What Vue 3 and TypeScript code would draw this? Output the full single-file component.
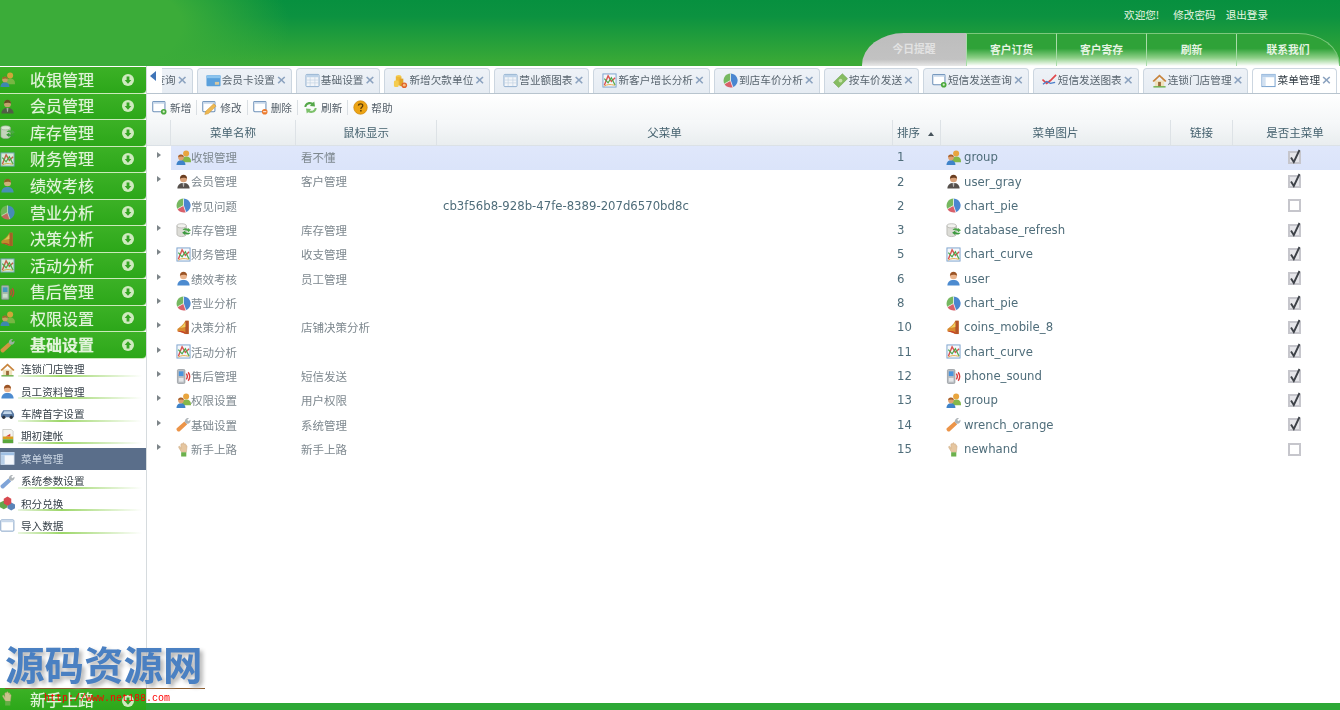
<script setup lang="ts">
interface TabItem { name: string; icon: string; active?: boolean }
interface SideItem { name: string; icon: string; active?: boolean }
interface MenuRow {
  name: string
  tip: string
  parent: string
  sort: number
  icon: string
  iconName: string
  main: boolean
  tree: boolean
}

const links = ['欢迎您!', '修改密码', '退出登录']
const navs = ['今日提醒', '客户订货', '客户寄存', '刷新', '联系我们']

const groups: { name: string; icon: string; up?: boolean }[] = [
  { name: '收银管理', icon: 'i-group' },
  { name: '会员管理', icon: 'i-user-gray' },
  { name: '库存管理', icon: 'i-database' },
  { name: '财务管理', icon: 'i-curve' },
  { name: '绩效考核', icon: 'i-user' },
  { name: '营业分析', icon: 'i-pie' },
  { name: '决策分析', icon: 'i-coins-mobile' },
  { name: '活动分析', icon: 'i-curve' },
  { name: '售后管理', icon: 'i-phone' },
  { name: '权限设置', icon: 'i-group', up: true },
  { name: '基础设置', icon: 'i-wrench', up: true }
]

const subs: SideItem[] = [
  { name: '连锁门店管理', icon: 'i-house' },
  { name: '员工资料管理', icon: 'i-user' },
  { name: '车牌首字设置', icon: 'i-car' },
  { name: '期初建帐', icon: 'i-book' },
  { name: '菜单管理', icon: 'i-menu', active: true },
  { name: '系统参数设置', icon: 'i-wrench-blue' },
  { name: '积分兑换', icon: 'i-cubes' },
  { name: '导入数据', icon: 'i-window' }
]

const tabs: TabItem[] = [
  { name: '短信查询', icon: 'i-window-add' },
  { name: '会员卡设置', icon: 'i-card' },
  { name: '基础设置', icon: 'i-table' },
  { name: '新增欠款单位', icon: 'i-coins' },
  { name: '营业额图表', icon: 'i-table' },
  { name: '新客户增长分析', icon: 'i-curve' },
  { name: '到店车价分析', icon: 'i-pie' },
  { name: '按车价发送', icon: 'i-money' },
  { name: '短信发送查询', icon: 'i-window-add' },
  { name: '短信发送图表', icon: 'i-line' },
  { name: '连锁门店管理', icon: 'i-house' },
  { name: '菜单管理', icon: 'i-menu-tab', active: true }
]

const tools = [
  { name: '新增', icon: 'i-window-add' },
  { name: '修改', icon: 'i-window-edit' },
  { name: '删除', icon: 'i-window-del' },
  { name: '刷新', icon: 'i-refresh' },
  { name: '帮助', icon: 'i-help' }
]

const rows: MenuRow[] = [
  { name: '收银管理', tip: '看不懂', parent: '', sort: 1, icon: 'i-group', iconName: 'group', main: true, tree: true },
  { name: '会员管理', tip: '客户管理', parent: '', sort: 2, icon: 'i-user-gray', iconName: 'user_gray', main: true, tree: true },
  { name: '常见问题', tip: '', parent: 'cb3f56b8-928b-47fe-8389-207d6570bd8c', sort: 2, icon: 'i-pie', iconName: 'chart_pie', main: false, tree: false },
  { name: '库存管理', tip: '库存管理', parent: '', sort: 3, icon: 'i-database', iconName: 'database_refresh', main: true, tree: true },
  { name: '财务管理', tip: '收支管理', parent: '', sort: 5, icon: 'i-curve', iconName: 'chart_curve', main: true, tree: true },
  { name: '绩效考核', tip: '员工管理', parent: '', sort: 6, icon: 'i-user', iconName: 'user', main: true, tree: true },
  { name: '营业分析', tip: '', parent: '', sort: 8, icon: 'i-pie', iconName: 'chart_pie', main: true, tree: true },
  { name: '决策分析', tip: '店铺决策分析', parent: '', sort: 10, icon: 'i-coins-mobile', iconName: 'coins_mobile_8', main: true, tree: true },
  { name: '活动分析', tip: '', parent: '', sort: 11, icon: 'i-curve', iconName: 'chart_curve', main: true, tree: true },
  { name: '售后管理', tip: '短信发送', parent: '', sort: 12, icon: 'i-phone', iconName: 'phone_sound', main: true, tree: true },
  { name: '权限设置', tip: '用户权限', parent: '', sort: 13, icon: 'i-group', iconName: 'group', main: true, tree: true },
  { name: '基础设置', tip: '系统管理', parent: '', sort: 14, icon: 'i-wrench', iconName: 'wrench_orange', main: true, tree: true },
  { name: '新手上路', tip: '新手上路', parent: '', sort: 15, icon: 'i-hand', iconName: 'newhand', main: false, tree: true }
]
</script>

<template>
  <svg class="defs" aria-hidden="true">
    <symbol id="i-group" viewBox="0 0 16 16">
      <path d="M6 12c0-3 2-5 5-5s5 2 5 5v1H6z" fill="#84b84a" />
      <circle cx="10.8" cy="3.8" r="3.2" fill="#e9a53e" />
      <path d="M.5 16c0-3.6 2-5.2 4.8-5.2s4.800 1.600 4.800 5.200z" fill="#3f83c9" />
      <circle cx="5.300" cy="8" r="3" fill="#e0a070" />
      <path d="M2.300 7.800c0-2.300 1.400-3 3-3s3 .8 3 2.800c-1.500-.8-4-.9-6 .2z" fill="#a8622c" />
    </symbol>
    <symbol id="i-user-gray" viewBox="0 0 16 16">
      <path d="M1.500 15.500c0-4 2.500-6 6.500-6s6.500 2 6.500 6z" fill="#56504c" />
      <circle cx="8" cy="5" r="3.800" fill="#d9a27a" />
      <path d="M4.200 5c0-3 1.700-4.300 3.800-4.300S11.800 2 11.800 5c-1.800-1.300-5.600-1.300-7.600 0z" fill="#6a3f22" />
      <path d="M7 9.500h2l-.5 4h-1z" fill="#b8b8b8" />
    </symbol>
    <symbol id="i-user" viewBox="0 0 16 16">
      <path d="M1.500 15.500c0-4 2.500-6 6.500-6s6.500 2 6.500 6z" fill="#4c8bd0" />
      <circle cx="8" cy="5" r="3.800" fill="#eab48c" />
      <path d="M4.200 5c0-3 1.700-4.300 3.800-4.300S11.800 2 11.800 5c-1.800-1.300-5.600-1.300-7.600 0z" fill="#9a5426" />
    </symbol>
    <symbol id="i-pie" viewBox="0 0 16 16">
      <path d="M8 8V.5a7.500 7.500 0 0 1 2.500 14.600z" fill="#4a86d0" />
      <path d="M8 8 10.500 15.100A7.500 7.500 0 0 1 1.500 11.600z" fill="#d8606a" />
      <path d="M8 8 1.500 11.600A7.500 7.500 0 0 1 8 .5z" fill="#76b860" />
      <path d="M8 .5V8l2.500 7.100M8 8 1.500 11.600" fill="none" stroke="#fff" stroke-width=".7" />
    </symbol>
    <symbol id="i-database" viewBox="0 0 16 16">
      <path d="M1 3v9c0 1.500 2.500 2.500 5 2.500s5-1 5-2.500V3z" fill="#dcdcd6" stroke="#a8a8a4" stroke-width=".7" />
      <ellipse cx="6" cy="3" rx="5" ry="2.200" fill="#f2f2ee" stroke="#a8a8a4" stroke-width=".7" />
      <path d="M7 7.500c1-2 4-2.500 5.500-1V5L16 7.800 12.500 10V8.500C11 7.500 9 7.800 7 7.500z" fill="#4ea84a" />
      <path d="M15.500 10.500c-1 2-4 2.500-5.500 1V13L6.500 10.500 10 8v1.500c1.500 1 3.500.8 5.500 1z" fill="#3c9a3e" />
    </symbol>
    <symbol id="i-curve" viewBox="0 0 16 16">
      <rect x="1" y="1" width="14" height="14" fill="#f4f7fb" stroke="#7ba2cc" stroke-width="1" />
      <path d="M2.500 13 6.500 3l3.500 6 4-4" fill="none" stroke="#d9534f" stroke-width="1.500" />
      <path d="M2.500 6l4 4.500L10 5l4 8" fill="none" stroke="#4ea84a" stroke-width="1.300" />
      <path d="M2.500 14c3-2 6-2 11-1" fill="none" stroke="#e9a53e" stroke-width="1" />
    </symbol>
    <symbol id="i-coins-mobile" viewBox="0 0 16 16">
      <path d="M10 .8h3.500V15H10C7 13.500 4 12.500 1.500 12V9.500C4 8 8 5 10 .8z" fill="#d88a2e" />
      <path d="M10 .8h3.500V15H10z" fill="#b5542a" />
      <path d="M1.500 12c3-.5 6-.5 8.500 1v2C7 13.500 4 12.500 1.500 12z" fill="#c8452c" />
      <path d="M4 8.500c2-1 4-3 6-6v5z" fill="#f0d060" />
    </symbol>
    <symbol id="i-phone" viewBox="0 0 16 16">
      <rect x="1.500" y=".5" width="8" height="15" rx="1.200" fill="#b8bcc0" stroke="#8a8e92" stroke-width=".7" />
      <rect x="3" y="2.500" width="5" height="5" fill="#4a94dc" />
      <rect x="3" y="9.500" width="5" height="4" fill="#e4e6e8" />
      <path d="M11 5c1.300 1.800 1.300 4.200 0 6M13 3.500c2 2.800 2 6.200 0 9" fill="none" stroke="#d83a3a" stroke-width="1.500" />
    </symbol>
    <symbol id="i-wrench" viewBox="0 0 16 16">
      <path d="M.8 12 9 4.800l3 3L4 15.200c-1.800 1.200-4.400-1.400-3.200-3.200z" fill="#ec9448" />
      <path d="M9.500 5.500c-.5-2.500 1.500-5 4.500-4.500L12 3l1 1.500L15.500 3c.5 3-2 5-4.500 4z" fill="#aeb4b8" />
    </symbol>
    <symbol id="i-wrench-blue" viewBox="0 0 16 16">
      <path d="M.8 12 9 4.800l3 3L4 15.200c-1.800 1.200-4.400-1.400-3.200-3.200z" fill="#7fa4d8" />
      <path d="M9.500 5.500c-.5-2.500 1.500-5 4.500-4.500L12 3l1 1.500L15.500 3c.5 3-2 5-4.500 4z" fill="#aeb4b8" />
    </symbol>
    <symbol id="i-hand" viewBox="0 0 16 16">
      <path d="M3 6c-.5-1.500.5-2 1.200-1l1 2V2.500c0-1 1.300-1 1.500 0L7 1.500c.2-1 1.500-1 1.600 0l.3 1c.3-.9 1.500-.8 1.500.2v1.500c.5-.8 1.600-.5 1.400.5L11 11H6z" fill="#e6c6a0" stroke="#c8a47c" stroke-width=".5" />
      <rect x="5.500" y="11" width="5.500" height="4.500" fill="#6cb04c" />
    </symbol>
    <symbol id="i-house" viewBox="0 0 16 16">
      <path d="M3 8h10v6.500H3z" fill="#f0e2bc" />
      <path d="M.5 8.500 8 1.500l7.500 7-1.500 1L8 4 2 9.500z" fill="#c8843c" />
      <rect x="6.500" y="9.500" width="3" height="5" fill="#9a6a3a" />
      <rect x="1.500" y="14" width="13" height="1.500" fill="#6cb04c" />
    </symbol>
    <symbol id="i-car" viewBox="0 0 16 16">
      <path d="M1 8.500 3.500 4.500h9L15 8.500v3.500H1z" fill="#5c7ca4" />
      <path d="M4.500 5.500h7l1.500 3H3z" fill="#c2d6ea" />
      <circle cx="4" cy="12" r="1.800" fill="#2c3440" />
      <circle cx="12" cy="12" r="1.800" fill="#2c3440" />
    </symbol>
    <symbol id="i-book" viewBox="0 0 16 16">
      <path d="M3 .5h9l2 2V15H3z" fill="#f4f4f0" stroke="#b0b0ac" stroke-width=".6" />
      <rect x="3" y="8" width="11" height="3" fill="#d8a020" />
      <path d="M3 11h11v4H3z" fill="#5aa83c" />
      <path d="M6 8 11 5v3z" fill="#d84a3a" />
    </symbol>
    <symbol id="i-menu" viewBox="0 0 16 16">
      <rect x="1" y="1.500" width="14" height="13" fill="#f4f7fb" stroke="#cfdcec" stroke-width=".8" />
      <rect x="1" y="1.500" width="14" height="3" fill="#9fc0e4" />
      <rect x="1" y="4.500" width="4" height="10" fill="#b8cfe8" />
    </symbol>
    <symbol id="i-menu-tab" viewBox="0 0 16 16">
      <rect x="1" y="1.500" width="14" height="13" fill="#fff" stroke="#6f9ccc" stroke-width="1" />
      <rect x="1" y="1.500" width="14" height="3" fill="#b6cfea" />
      <rect x="1.500" y="4.500" width="3.500" height="9.500" fill="#d2e1f1" />
    </symbol>
    <symbol id="i-table" viewBox="0 0 16 16">
      <rect x="1" y="1.500" width="14" height="13" rx="1" fill="#f2f5f9" stroke="#8eaecf" stroke-width="1" />
      <rect x="1.500" y="2" width="13" height="2.500" fill="#bcd2e8" />
      <path d="M5.500 4.500v9.500M10.500 4.500v9.500M1.500 7.500h13M1.500 10.500h13" stroke="#c2d2e2" stroke-width=".7" />
    </symbol>
    <symbol id="i-cubes" viewBox="0 0 16 16">
      <path d="M0 7l4-2 4 2v5l-4 2-4-2z" fill="#62a84c" />
      <path d="M8 9l4-2 4 2v4l-4 2.500L8 13z" fill="#5a84b8" />
      <path d="M4 3l4-2.500L12 3v5l-4 2.500L4 8z" fill="#d84a50" />
    </symbol>
    <symbol id="i-window" viewBox="0 0 16 16">
      <rect x=".8" y="2" width="14" height="12" rx="1" fill="#fff" stroke="#7f9fc4" stroke-width="1" />
      <rect x="1.300" y="2.500" width="13" height="2" fill="#c8d8ea" />
    </symbol>
    <symbol id="i-card" viewBox="0 0 16 16">
      <rect x=".5" y="2.500" width="15" height="11.500" rx="1" fill="#5aa0dc" />
      <rect x=".5" y="2.500" width="15" height="3" fill="#8cc4ee" />
      <rect x="9.500" y="9.500" width="4.500" height="3" fill="#d8c8a0" />
    </symbol>
    <symbol id="i-coins" viewBox="0 0 16 16">
      <ellipse cx="6" cy="4" rx="3" ry="2" fill="#f4cc50" />
      <rect x="3" y="4" width="6" height="9" fill="#eeb838" />
      <rect x="1" y="8" width="5" height="7" rx="1.500" fill="#f4cc50" />
      <rect x="7" y="6" width="4" height="8" fill="#e0a428" />
      <circle cx="12" cy="13" r="3" fill="#e0622c" />
      <circle cx="12" cy="13" r="1.500" fill="#f4c080" />
    </symbol>
    <symbol id="i-money" viewBox="0 0 16 16">
      <path d="M.5 10 10 .8 15.500 6 6 15.500z" fill="#86bc62" stroke="#6ca24c" stroke-width=".6" />
      <circle cx="8" cy="8" r="2" fill="#c4e0a8" />
    </symbol>
    <symbol id="i-line" viewBox="0 0 16 16">
      <path d="M.5 7 5 11l4-3 6-6" fill="none" stroke="#e0484c" stroke-width="1.800" />
      <path d="M1 12l4-3 4 2 5-1" fill="none" stroke="#4a7cc8" stroke-width="1.400" />
    </symbol>
    <symbol id="i-window-add" viewBox="0 0 16 16">
      <rect x=".8" y="1.500" width="13" height="11" rx="1" fill="#fff" stroke="#6c90b8" stroke-width="1.100" />
      <rect x="1.300" y="2" width="12" height="2" fill="#c8d8ea" />
      <circle cx="12.500" cy="12.500" r="3" fill="#4aa83c" />
      <circle cx="12.500" cy="12.500" r="1.200" fill="#d8f0c8" />
    </symbol>
    <symbol id="i-window-del" viewBox="0 0 16 16">
      <rect x=".8" y="1.500" width="13" height="11" rx="1" fill="#fff" stroke="#6c90b8" stroke-width="1.100" />
      <rect x="1.300" y="2" width="12" height="2" fill="#c8d8ea" />
      <circle cx="12.500" cy="12.500" r="3" fill="#ec7a2c" />
      <rect x="10.800" y="12" width="3.400" height="1" fill="#fff" />
    </symbol>
    <symbol id="i-window-edit" viewBox="0 0 16 16">
      <rect x=".8" y="1.500" width="13" height="11" rx="1" fill="#fff" stroke="#6c90b8" stroke-width="1.100" />
      <rect x="1.300" y="2" width="12" height="2" fill="#c8d8ea" />
      <path d="M3 15.500 4 12 12.500 4l2.500 2.500L7 14.500z" fill="#eeb850" stroke="#c8902c" stroke-width=".5" />
    </symbol>
    <symbol id="i-refresh" viewBox="0 0 16 16">
      <path d="M1.500 7.500C1.500 3.500 6 .8 10.500 3l1.500-1.500.8 5.500-5.500-.6 1.500-1.500C6.500 3.800 4 5 3.500 7.500z" fill="#55a84a" />
      <path d="M14.500 8.500c0 4-4.500 6.700-9 4.500L4 14.500 3.200 9l5.500.6-1.500 1.500c2.300 1.100 4.800-.100 5.300-2.600z" fill="#7cc06a" />
    </symbol>
    <symbol id="i-help" viewBox="0 0 16 16">
      <circle cx="8" cy="8" r="7.200" fill="#eda414" stroke="#c88408" stroke-width=".7" />
      <path d="M5.800 6c.2-2.600 4.700-2.600 4.600 0 0 1.800-2 1.800-2 3.500" fill="none" stroke="#5a3c08" stroke-width="1.400" />
      <rect x="7.600" y="10.600" width="1.600" height="1.700" fill="#5a3c08" />
    </symbol>
    <symbol id="i-check" viewBox="0 0 13 16">
      <path d="M3 8.500 5.800 13 11.500 1" fill="none" stroke="#3e4248" stroke-width="1.900" />
    </symbol>
  </svg>

  <div class="shot">
    <div class="page">
      <header class="top">
        <div class="top-links">
          <span v-for="link in links" :key="link">{{ link }}</span>
        </div>
        <nav class="top-nav">
          <a v-for="(nav, i) in navs" :key="nav" :class="['nav-tab', `nav-${i}`]">{{ nav }}</a>
        </nav>
      </header>

      <div class="body">
        <aside class="side">
          <div v-for="g in groups" :key="g.name" :class="['acc', { 'acc-open': g.name === '基础设置' }]">
            <svg class="ico acc-ico"><use :href="`#${g.icon}`" /></svg>
            <span class="acc-name">{{ g.name }}</span>
            <svg class="acc-arrow" viewBox="0 0 12 12">
              <circle cx="6" cy="6" r="6" fill="#cfeabf" />
              <path v-if="g.up" d="M6 2.300 9.300 6H7.400v3.500H4.600V6H2.700z" fill="#35a523" />
              <path v-else d="M6 9.700 9.300 6H7.400V2.500H4.600V6H2.700z" fill="#35a523" />
            </svg>
          </div>
          <ul class="subs">
            <li v-for="s in subs" :key="s.name" :class="['sub', { on: s.active }]">
              <svg class="ico"><use :href="`#${s.icon}`" /></svg>
              <span>{{ s.name }}</span>
            </li>
          </ul>
          <div class="acc acc-last">
            <svg class="ico acc-ico"><use href="#i-hand" /></svg>
            <span class="acc-name">新手上路</span>
            <svg class="acc-arrow" viewBox="0 0 12 12">
              <circle cx="6" cy="6" r="6" fill="#cfeabf" />
              <path d="M6 9.700 9.300 6H7.400V2.500H4.600V6H2.700z" fill="#35a523" />
            </svg>
          </div>
        </aside>

        <main class="main">
          <div class="tabs">
            <span class="tabs-prev"><i></i></span>
            <div v-for="t in tabs" :key="t.name + t.icon" :class="['tab', { on: t.active }]">
              <svg class="ico"><use :href="`#${t.icon}`" /></svg>
              <span class="tab-name">{{ t.name }}</span>
              <span class="tab-x">×</span>
            </div>
          </div>

          <div class="tools">
            <template v-for="(tool, i) in tools" :key="tool.name">
              <i v-if="i" class="tool-sep"></i>
              <button class="tool" type="button">
                <svg class="ico"><use :href="`#${tool.icon}`" /></svg>
                <span>{{ tool.name }}</span>
              </button>
            </template>
          </div>

          <div class="grid">
            <div class="row head">
              <div></div>
              <div>菜单名称</div>
              <div>鼠标显示</div>
              <div>父菜单</div>
              <div class="head-sort">排序<i class="sort-up"></i></div>
              <div>菜单图片</div>
              <div>链接</div>
              <div class="head-last">是否主菜单</div>
            </div>
            <div v-for="(r, i) in rows" :key="i" :class="['row', 'line', { sel: i === 0 }]">
              <div class="c-tree"><i v-if="r.tree" class="tree-arrow"></i></div>
              <div class="c-name">
                <svg class="ico"><use :href="`#${r.icon}`" /></svg>
                <span>{{ r.name }}</span>
              </div>
              <div class="c-tip">{{ r.tip }}</div>
              <div class="c-parent">{{ r.parent }}</div>
              <div class="c-sort">{{ r.sort }}</div>
              <div class="c-img">
                <svg class="ico"><use :href="`#${r.icon}`" /></svg>
                <span>{{ r.iconName }}</span>
              </div>
              <div></div>
              <div class="c-main">
                <span :class="['box', { checked: r.main }]">
                  <svg v-if="r.main" class="tick"><use href="#i-check" /></svg>
                </span>
              </div>
            </div>
          </div>

          <div class="foot"></div>
        </main>
      </div>
    </div>

    <div class="mark">
      <div class="mark-title">源码资源网</div>
      <div class="mark-url">http://www.net188.com</div>
    </div>
  </div>
</template>

<style>
html, body {
  margin: 0;
  background: #fff;
  overflow: hidden;
}
</style>

<style scoped>
.defs {
  position: absolute;
  width: 0;
  height: 0;
}

.shot {
  position: relative;
  width: 1340px;
  height: 710px;
  overflow: hidden;
  font-family: "Noto Sans CJK SC", "Liberation Sans", sans-serif;
}

.page {
  height: 710px;
  display: flex;
  flex-direction: column;
  filter: blur(0.45px);
}

.ico {
  width: 15px;
  height: 15px;
  flex: none;
}

/* header */
.top {
  height: 66px;
  flex: none;
  display: flex;
  flex-direction: column;
  background:
    radial-gradient(ellipse 240px 100px at 50px 25px, #3bac39 55%, rgba(59, 172, 57, 0) 100%),
    linear-gradient(#07903f 0, #0c9240 25%, #3aaa36 95%);
}

.top-links {
  height: 33px;
  display: flex;
  justify-content: flex-end;
  gap: 10px;
  padding: 6px 72px 0 0;
  box-sizing: border-box;
  font-size: 10.6px;
  line-height: 18px;
  color: #e8f6e4;
}

.top-links span:first-child {
  margin-right: 4px;
}

.top-nav {
  margin-left: auto;
  width: 478px;
  height: 33px;
  display: flex;
}

.nav-tab {
  width: 90px;
  border-left: 1px solid #a8dca8;
  border-top: 1px solid #7cc87c;
  box-sizing: border-box;
  text-align: center;
  font-size: 10.8px;
  font-weight: 700;
  line-height: 30px;
  color: #e6f4e2;
  background: linear-gradient(#2fa238 0, #2fa238 45%, #8fd088 75%, #fff 100%);
}

.nav-0 {
  width: 104px;
  border: 0;
  border-top-left-radius: 42px 32px;
  background: linear-gradient(#bdbdbd 0, #c2c2c2 80%, #e8e8e8 100%);
  color: #e2e2e2;
  line-height: 31px;
}

.nav-4 {
  width: 104px;
  border-top-right-radius: 42px 32px;
  border-right: 1px solid #7cc87c;
}

/* left column */
.body {
  flex: 1;
  min-height: 0;
  display: flex;
}

.side {
  width: 147px;
  flex: none;
  display: flex;
  flex-direction: column;
  box-sizing: border-box;
  border-right: 1px solid #d6dbde;
  padding-top: 1px;
  overflow: hidden;
}

.acc {
  height: 26.55px;
  flex: none;
  box-sizing: border-box;
  display: flex;
  align-items: center;
  position: relative;
  background: linear-gradient(#3cb126, #2ca719);
  border-bottom: 1.6px solid #cbeabb;
  border-bottom-right-radius: 4px;
}

.acc-ico {
  opacity: 0.85;
}

.acc-name {
  margin-left: 15px;
  font-size: 16px;
  line-height: 22px;
  color: #e2f4da;
  text-shadow: 0 0 1px rgba(255, 255, 255, 0.5);
  margin-bottom: 2px;
}

.acc-open .acc-name {
  font-weight: 700;
}

.acc-arrow {
  position: absolute;
  left: 122px;
  top: 6.500px;
  width: 12px;
  height: 12px;
}

.subs {
  list-style: none;
  margin: -1px 0 0;
  padding: 0;
  flex: 1;
}

.sub {
  height: 22.4px;
  display: flex;
  align-items: center;
  gap: 6px;
  position: relative;
  font-size: 10.6px;
  line-height: 22px;
  color: #38424a;
}

.sub::after {
  content: "";
  position: absolute;
  left: 18px;
  right: 4px;
  top: 17px;
  height: 2px;
  background: linear-gradient(90deg, rgba(140, 205, 90, 0.2), #9cd668 35%, rgba(160, 216, 112, 0));
}

.sub.on {
  background: #5a6e8a;
  color: #c8d4e2;
}

.sub.on::after {
  display: none;
}

.acc-last {
  height: 22px;
  border-bottom: 0;
  align-items: flex-start;
  border-radius: 0;
}

.acc-last .acc-ico {
  margin-top: 3px;
}

.acc-last .acc-arrow {
  top: 7px;
}

/* right column */
.main {
  flex: 1;
  min-width: 0;
  display: flex;
  flex-direction: column;
}

.tabs {
  height: 28px;
  flex: none;
  display: flex;
  justify-content: flex-end;
  align-items: flex-end;
  gap: 4px;
  padding-right: 3px;
  position: relative;
  overflow: hidden;
  background: #fff;
  border-bottom: 1px solid #b8c4ce;
  box-sizing: border-box;
}

.tabs-prev {
  position: absolute;
  left: 0;
  top: 0;
  bottom: 0;
  width: 15px;
  z-index: 1;
  background: #fff;
}

.tabs-prev i {
  position: absolute;
  left: 3px;
  top: 5px;
  border-style: solid;
  border-width: 5.500px 6px 5.500px 0;
  border-color: transparent #3f74b8 transparent transparent;
}

.tab {
  flex: none;
  height: 25px;
  display: flex;
  align-items: center;
  box-sizing: border-box;
  padding: 0 7.900px 2px 8px;
  background: linear-gradient(#eef2f7, #e6ecf3);
  border: 1px solid #ccd6e0;
  border-bottom: 0;
  border-radius: 4px 4px 0 0;
  font-size: 10.67px;
  line-height: 22px;
  color: #59656f;
}

.tab.on {
  background: #fff;
  color: #333e46;
  height: 26px;
  margin-bottom: -1px;
  padding-bottom: 3px;
}

.tab-name {
  margin-left: 1px;
}

.tab-x {
  width: 7px;
  margin-left: 1px;
  font-family: "DejaVu Sans", sans-serif;
  font-size: 13px;
  line-height: 14px;
  font-weight: 700;
  text-align: center;
  color: #8ba2bf;
}

.tools {
  height: 26px;
  flex: none;
  display: flex;
  align-items: center;
  background: linear-gradient(#fff, #f5f7f8);
}

.tool {
  display: flex;
  align-items: center;
  gap: 3px;
  padding: 0 5px;
  border: 0;
  background: none;
  font: inherit;
  font-size: 10.67px;
  color: #55606a;
}

.tool-sep {
  width: 1px;
  height: 15px;
  background: #dadfe3;
}

.row {
  display: grid;
  grid-template-columns: 24px 125px 141px 456px 48px 230px 62px 1fr;
}

.head {
  height: 26px;
  box-sizing: border-box;
  background: linear-gradient(#f7f9fa, #e9edef);
  border-bottom: 1px solid #dbe1e6;
  font-size: 11.5px;
  line-height: 25px;
  color: #46626f;
  text-align: center;
}

.head > div {
  border-right: 1px solid #dde2e6;
}

.head > div.head-last {
  border-right: 0;
  padding-left: 17px;
}

.head-sort {
  text-align: left;
  padding-left: 4px;
  position: relative;
}

.sort-up {
  position: absolute;
  left: 35px;
  top: 12px;
  border-style: solid;
  border-width: 0 3px 4px;
  border-color: transparent transparent #45525a;
}

.line {
  height: 24.33px;
  grid-template-rows: 24.33px;
  font-size: 11.5px;
  line-height: 22px;
  color: #7e888f;
  align-items: center;
}

.line > div:not(.c-tree) {
  box-sizing: border-box;
  padding-bottom: 2px;
}

.sel > div:not(.c-tree) {
  height: 100%;
  display: flex;
  align-items: center;
  background: linear-gradient(#dfe7fb, #dbe4fa);
}

.c-tree {
  position: relative;
  height: 100%;
}

.tree-arrow {
  position: absolute;
  left: 10px;
  top: 6px;
  border-style: solid;
  border-width: 3px 0 3px 4px;
  border-color: transparent transparent transparent #7d8589;
}

.c-name {
  display: flex;
  align-items: center;
  padding-left: 5px;
}

.c-tip {
  padding-left: 5px;
}

.c-parent,
.c-sort,
.c-img {
  font-family: "DejaVu Sans", sans-serif;
  font-size: 11.7px;
  line-height: 24px;
  color: #4f6d7a;
}

.c-parent {
  padding-left: 6px;
  white-space: nowrap;
}

.c-sort {
  padding-left: 4px;
}

.c-img {
  display: flex;
  align-items: center;
  gap: 3px;
  padding-left: 5px;
}

.c-main {
  display: flex;
  align-items: center;
  justify-content: center;
  padding-left: 15px;
}

.box {
  position: relative;
  width: 9px;
  height: 9px;
  border: 2px solid #c6c6cc;
  background: #fff;
}

.box.checked {
  background: #e6e6ea;
}

.tick {
  position: absolute;
  left: -2px;
  top: -4px;
  width: 13px;
  height: 16px;
}

.grid {
  flex: 1;
  min-height: 0;
}

.foot {
  height: 7px;
  flex: none;
  margin-left: -2px;
  background: #2ea836;
}

/* site stamp over the page */
.mark {
  position: absolute;
  left: 5px;
  top: 640px;
  width: 200px;
}

.mark-title {
  height: 49px;
  box-sizing: border-box;
  border-bottom: 1px solid #8a5a2c;
  font-size: 39.5px;
  font-weight: 700;
  line-height: 46px;
  white-space: nowrap;
  color: #4a80c2;
  text-shadow: 3px 3px 4px #b0b0b0;
}

.mark-url {
  margin: 4px 0 0 39px;
  font-family: "Liberation Mono", monospace;
  font-size: 10px;
  line-height: 12px;
  color: #ff0000;
  white-space: nowrap;
}
</style>
